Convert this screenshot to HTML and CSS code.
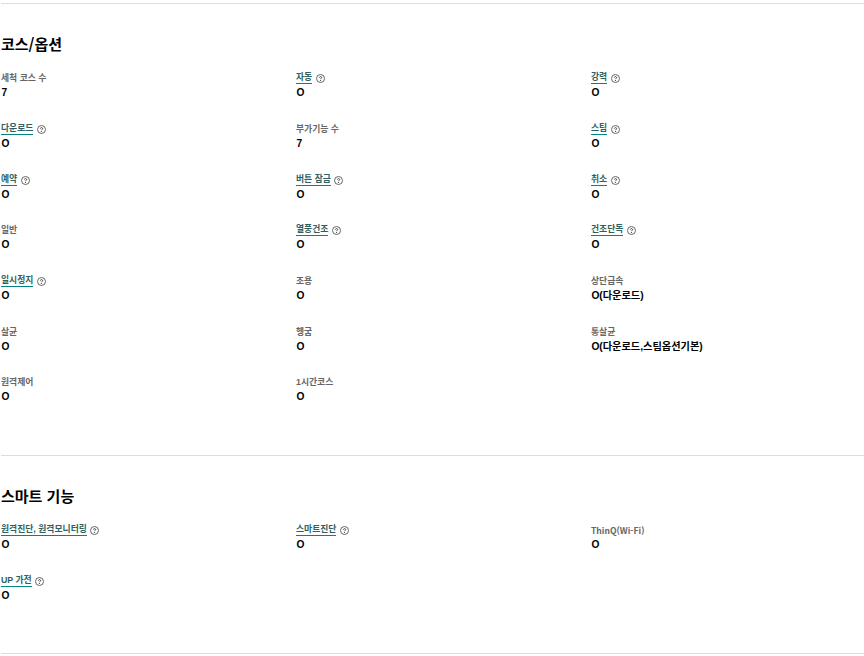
FILE: index.html
```html
<!DOCTYPE html>
<html lang="ko">
<head>
<meta charset="utf-8">
<title>코스/옵션</title>
<link rel="stylesheet" href="styles.css">
</head>
<body>
<svg width="0" height="0" class="defs"><symbol id="q" viewBox="0 0 9 9"><circle cx="4.5" cy="4.5" r="4" fill="none" stroke="#666" stroke-width="1"/><path d="M3.4 3.6c.1-.7.6-1 1.1-1 .7 0 1.1.4 1.1 1 0 .8-1.1.8-1.1 1.6" fill="none" stroke="#333" stroke-width=".9"/><circle cx="4.5" cy="6.5" r=".6" fill="#333"/></symbol></svg>
<section class="sec first">
<h2>코스/옵션</h2>
<dl class="grid">
<div class="item"><dt>세척 코스 수</dt><dd>7</dd></div>
<div class="item"><dt><a>자동</a><svg class="q"><use href="#q"/></svg></dt><dd>O</dd></div>
<div class="item"><dt><a>강력</a><svg class="q"><use href="#q"/></svg></dt><dd>O</dd></div>
<div class="item"><dt><a>다운로드</a><svg class="q"><use href="#q"/></svg></dt><dd>O</dd></div>
<div class="item"><dt>부가기능 수</dt><dd>7</dd></div>
<div class="item"><dt><a>스팀</a><svg class="q"><use href="#q"/></svg></dt><dd>O</dd></div>
<div class="item"><dt><a>예약</a><svg class="q"><use href="#q"/></svg></dt><dd>O</dd></div>
<div class="item"><dt><a>버튼 잠금</a><svg class="q"><use href="#q"/></svg></dt><dd>O</dd></div>
<div class="item"><dt><a>취소</a><svg class="q"><use href="#q"/></svg></dt><dd>O</dd></div>
<div class="item"><dt>일반</dt><dd>O</dd></div>
<div class="item"><dt><a>열풍건조</a><svg class="q"><use href="#q"/></svg></dt><dd>O</dd></div>
<div class="item"><dt><a>건조단독</a><svg class="q"><use href="#q"/></svg></dt><dd>O</dd></div>
<div class="item"><dt><a>일시정지</a><svg class="q"><use href="#q"/></svg></dt><dd>O</dd></div>
<div class="item"><dt>조용</dt><dd>O</dd></div>
<div class="item"><dt>상단급속</dt><dd>O(다운로드)</dd></div>
<div class="item"><dt>살균</dt><dd>O</dd></div>
<div class="item"><dt>헹굼</dt><dd>O</dd></div>
<div class="item"><dt>통살균</dt><dd>O(다운로드,스팀옵션기본)</dd></div>
<div class="item"><dt>원격제어</dt><dd>O</dd></div>
<div class="item"><dt>1시간코스</dt><dd>O</dd></div>
</dl>
</section>
<section class="sec">
<h2>스마트 기능</h2>
<dl class="grid">
<div class="item"><dt><a>원격진단, 원격모니터링</a><svg class="q"><use href="#q"/></svg></dt><dd>O</dd></div>
<div class="item"><dt><a>스마트진단</a><svg class="q"><use href="#q"/></svg></dt><dd>O</dd></div>
<div class="item"><dt class="latin">ThinQ(Wi-Fi)</dt><dd>O</dd></div>
<div class="item"><dt><a>UP 가전</a><svg class="q"><use href="#q"/></svg></dt><dd>O</dd></div>
</dl>
</section>
</body>
</html>
```
FILE: styles.css
```css
* { box-sizing: border-box; }
html, body { margin: 0; padding: 0; background: #fff; }
body {
  padding: 3px 0 0 1px;
  font-family: "Liberation Sans", "Noto Sans CJK KR", sans-serif;
  color: #000;
}
.defs { position: absolute; }
.sec {
  border-top: 1px solid #ddd;
  border-bottom: 1px solid #ddd;
  padding: 30px 0 0;
  height: 199px;
  margin-top: -1px;
}
.sec.first { height: 453px; margin-top: 0; }
h2 {
  margin: 0 0 17.3px;
  font-family: "Noto Sans CJK KR", sans-serif;
  font-size: 15px;
  line-height: 20px;
  font-weight: 700;
}
.grid {
  margin: 0;
  display: grid;
  grid-template-columns: repeat(3, 295px);
  grid-auto-rows: 50.67px;
}
dt {
  display: flex;
  align-items: center;
  gap: 3.5px;
  font-size: 8.8px;
  line-height: 14px;
  font-weight: 700;
  color: #666;
}
dt.latin {
  font-family: "Noto Sans CJK KR", sans-serif;
  font-size: 8.6px;
}
dt a {
  color: #2f5f60;
  border-bottom: 1px solid #008484;
  line-height: 12px;
  margin-bottom: 1px;
}
.q { width: 9px; height: 9px; margin-top: 1px; }
dd {
  margin: 1.2px 0 0;
  padding-left: .4px;
  font-size: 10.2px;
  line-height: 14px;
  font-weight: 700;
}
```
